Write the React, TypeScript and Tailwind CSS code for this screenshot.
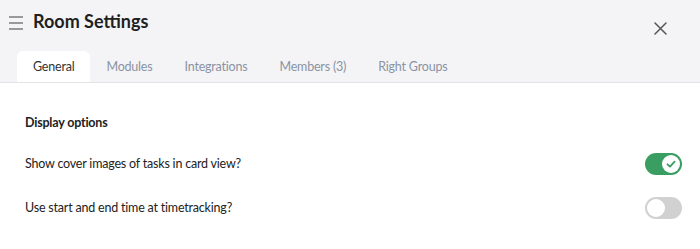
import React from 'react';

const tabs = ['General', 'Modules', 'Integrations', 'Members (3)', 'Right Groups'];

const Toggle: React.FC<{ on: boolean }> = ({ on }) => (
    <div className={`w-[37px] h-[22px] rounded-full p-[2px] flex items-center ${on ? 'bg-[#3a9e63] justify-end' : 'bg-[#d1d1d1] justify-start'}`}>
        <div className="w-[18px] h-[18px] rounded-full bg-white flex items-center justify-center">
            {on && (
                <svg width="12" height="12" viewBox="0 0 12 12" fill="none">
                    <path d="M2.5 6.3 L5 8.6 L9.6 3.6" stroke="#3a9e63" strokeWidth="1.8" strokeLinecap="round" strokeLinejoin="round" />
                </svg>
            )}
        </div>
    </div>
);

export default function App() {
    return (
        <div className="w-[700px] h-[249px] bg-white text-[#222] flex flex-col" style={{ fontFamily: 'Lato, sans-serif' }}>
            {/* Header */}
            <div className="bg-[#f4f4f6] border-b border-[#e4e4e7]">
                <div className="flex items-start pl-[9px] pr-[33px] pt-[9px]">
                    <div className="flex flex-col gap-[4px] mt-[7px]">
                        <span className="block w-[14px] h-[2px] bg-[#999]" />
                        <span className="block w-[14px] h-[2px] bg-[#999]" />
                        <span className="block w-[14px] h-[2px] bg-[#999]" />
                    </div>
                    <h1 className="ml-[10px] text-[18px] font-bold leading-[24px] text-[#1f1f1f]">Room Settings</h1>
                    <button className="ml-auto mt-[13px] text-[#555]">
                        <svg width="13" height="13" viewBox="0 0 13 13">
                            <path d="M1 1 L12 12 M12 1 L1 12" stroke="#555" strokeWidth="1.5" strokeLinecap="round" />
                        </svg>
                    </button>
                </div>
                <div className="flex pl-[17px] mt-[16px] text-[12.5px] tracking-[-0.2px]">
                    {tabs.map((t, i) => (
                        <div
                            key={t}
                            className={`h-[31px] px-[16px] pt-[2px] flex items-center rounded-t-md ${i === 0 ? 'bg-white text-[#333]' : 'text-[#8a93a3]'}`}
                        >
                            {t}
                        </div>
                    ))}
                </div>
            </div>

            {/* Content */}
            <div className="px-[25px] pt-[31px] pr-[18px] text-[12.5px] tracking-[-0.2px]">
                <div className="font-bold text-[#222] leading-[18px]">Display options</div>
                <div className="flex items-center justify-between mt-[21px]">
                    <span>Show cover images of tasks in card view?</span>
                    <Toggle on />
                </div>
                <div className="flex items-center justify-between mt-[22px]">
                    <span>Use start and end time at timetracking?</span>
                    <Toggle on={false} />
                </div>
            </div>
        </div>
    );
}
